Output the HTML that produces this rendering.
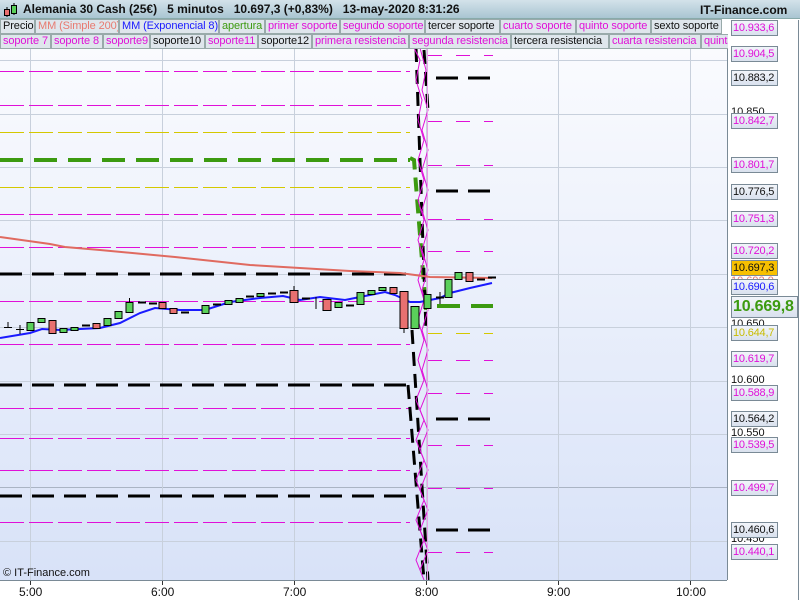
<!DOCTYPE html>
<html><head><meta charset="utf-8"><style>
*{margin:0;padding:0;box-sizing:border-box}
body{width:800px;height:600px;overflow:hidden;background:#fff;font-family:"Liberation Sans",sans-serif;position:relative}
.hdr{position:absolute;left:0;top:0;width:800px;height:19px;background:linear-gradient(#d3e2ea,#a9c5d2);font-size:12px;font-weight:bold;color:#111;border-bottom:1px solid #8aa;white-space:nowrap}
.hdr span{position:absolute;top:2px;white-space:nowrap}
.row{position:absolute;left:0;height:15px;width:728px;background:#fff;overflow:hidden}
.row div{position:absolute;top:0;height:15px;background:#dfe6ec;border:1px solid #9aa;font-size:11px;line-height:13px;padding-left:2px;white-space:nowrap;overflow:hidden;letter-spacing:-0.1px}
.m{color:#e010d8}.k{color:#111}
.lab{position:absolute;left:731px;width:47px;height:16px;border:1px solid #7a8a96;background:linear-gradient(#f2f5fa,#d9e1ee);font-size:11px;line-height:14px;padding-left:1px;white-space:nowrap;overflow:hidden;letter-spacing:-0.2px}
.ax{position:absolute;left:731px;font-size:11px;color:#111}
.tm{position:absolute;top:585px;font-size:12px;color:#111}
</style></head><body>
<svg width="800" height="600" style="position:absolute;left:0;top:0">
<defs><linearGradient id="bg" x1="0" y1="0" x2="0" y2="1"><stop offset="0" stop-color="#fafbfe"/><stop offset="1" stop-color="#d8e2f8"/></linearGradient></defs>
<rect x="0" y="48" width="727" height="532" fill="url(#bg)"/>
<g stroke="#c8d0dc" stroke-width="1">
<line x1="0" y1="60.5" x2="727" y2="60.5"/><line x1="0" y1="114.5" x2="727" y2="114.5"/><line x1="0" y1="167.5" x2="727" y2="167.5"/><line x1="0" y1="220.5" x2="727" y2="220.5"/><line x1="0" y1="274.5" x2="727" y2="274.5"/><line x1="0" y1="327.5" x2="727" y2="327.5"/><line x1="0" y1="381.5" x2="727" y2="381.5"/><line x1="0" y1="434.5" x2="727" y2="434.5"/><line x1="0" y1="487.5" x2="727" y2="487.5" stroke="#aab4c4"/><line x1="0" y1="541.5" x2="727" y2="541.5"/>
<line x1="30.5" y1="48" x2="30.5" y2="580"/><line x1="162.5" y1="48" x2="162.5" y2="580"/><line x1="294.5" y1="48" x2="294.5" y2="580"/><line x1="426.5" y1="48" x2="426.5" y2="580"/><line x1="558.5" y1="48" x2="558.5" y2="580"/><line x1="690.5" y1="48" x2="690.5" y2="580"/>
</g>
<g stroke="#e010d8" stroke-width="1" stroke-dasharray="24,5">
<line x1="0" y1="71.5" x2="410" y2="71.5"/><line x1="0" y1="105.5" x2="410" y2="105.5"/><line x1="0" y1="214.5" x2="410" y2="214.5"/><line x1="0" y1="247.5" x2="410" y2="247.5"/><line x1="0" y1="301.5" x2="410" y2="301.5"/><line x1="0" y1="344.5" x2="410" y2="344.5"/><line x1="0" y1="408.5" x2="410" y2="408.5"/><line x1="0" y1="438.5" x2="410" y2="438.5"/><line x1="0" y1="470.5" x2="410" y2="470.5"/><line x1="0" y1="522.5" x2="410" y2="522.5"/>
</g>
<g stroke="#e010d8" stroke-width="1" stroke-dasharray="14,14">
<line x1="428" y1="55.5" x2="493" y2="55.5"/><line x1="428" y1="121.5" x2="493" y2="121.5"/><line x1="428" y1="165.5" x2="493" y2="165.5"/><line x1="428" y1="219.5" x2="493" y2="219.5"/><line x1="428" y1="251.5" x2="493" y2="251.5"/><line x1="428" y1="360.5" x2="493" y2="360.5"/><line x1="428" y1="393.5" x2="493" y2="393.5"/><line x1="428" y1="445.5" x2="493" y2="445.5"/><line x1="428" y1="488.5" x2="493" y2="488.5"/><line x1="428" y1="552.5" x2="493" y2="552.5"/>
</g>
<g stroke="#d4c800" stroke-width="1" stroke-dasharray="24,5">
<line x1="0" y1="132.5" x2="410" y2="132.5"/><line x1="0" y1="187.5" x2="410" y2="187.5"/>
</g>
<line x1="428" y1="333.5" x2="493" y2="333.5" stroke="#d4c800" stroke-dasharray="14,14"/>
<line x1="0" y1="160" x2="410" y2="160" stroke="#3c9a10" stroke-width="4" stroke-dasharray="23,11"/>
<line x1="437" y1="306" x2="493" y2="306" stroke="#3c9a10" stroke-width="4" stroke-dasharray="23,11"/>
<g stroke="#000" stroke-width="3" stroke-dasharray="22,10">
<line x1="0" y1="274" x2="410" y2="274"/><line x1="0" y1="385" x2="410" y2="385"/><line x1="0" y1="496" x2="410" y2="496"/>
</g>
<g stroke="#000" stroke-width="3" stroke-dasharray="22,10">
<line x1="436" y1="78" x2="493" y2="78"/><line x1="436" y1="191" x2="493" y2="191"/><line x1="436" y1="419" x2="493" y2="419"/><line x1="436" y1="530" x2="493" y2="530"/>
</g>
<g fill="none">
<polyline points="410,158 414,160 426,310" stroke="#3c9a10" stroke-width="4" stroke-dasharray="14,8"/>
<line x1="416" y1="48" x2="426" y2="330" stroke="#000" stroke-width="3" stroke-dasharray="14,8"/>
<line x1="424" y1="50" x2="428" y2="110" stroke="#000" stroke-width="3" stroke-dasharray="14,8"/>
<line x1="412" y1="330" x2="428" y2="580" stroke="#000" stroke-width="3" stroke-dasharray="14,8"/>
<line x1="408" y1="385" x2="424" y2="580" stroke="#000" stroke-width="3" stroke-dasharray="14,8"/>
<polyline points="414,48 420,60 416,80 422,100 418,120 424,140 418,160 424,180 418,200 424,220 418,240 424,260 418,280 424,300 418,320 424,340 418,360 424,380 416,400 424,420 416,440 424,460 416,480 424,500 416,520 424,540 416,560 424,580" stroke="#e010d8" stroke-width="1"/>
<polyline points="420,48 426,70 422,90 428,110 422,130 428,150 422,170 428,190 422,210 428,230 422,250 428,270 422,290 428,310 422,330 428,350 422,370 428,390 420,410 428,430 420,450 428,470 420,490 428,510 420,530 428,550 420,570" stroke="#e010d8" stroke-width="1"/>
<line x1="427.5" y1="48" x2="427.5" y2="580" stroke="#e8a0e8" stroke-width="1"/>
<polyline points="0,237 50,244 65,247 100,250 175,257 250,265 350,271 400,273 430,277 492,278" stroke="#e06a60" stroke-width="2"/>
<polyline points="0,338 30,333 42,329 60,330 100,328 120,323 140,313 155,308 180,310 205,310 230,302 260,298 283,296 300,300 320,297 345,300 360,297 385,292 395,295 410,302 420,302 440,298 450,293 470,288 492,283" stroke="#1a1aff" stroke-width="2"/>
</g>
<g stroke="#000" stroke-width="1">
<line x1="8" y1="322" x2="8" y2="328"/><line x1="4" y1="327.5" x2="12" y2="327.5"/>
<line x1="20" y1="325" x2="20" y2="334"/><line x1="16" y1="329.5" x2="24" y2="329.5"/>
<rect x="27" y="322.5" width="7" height="8" fill="#5ad05a"/>
<rect x="38" y="318.5" width="7" height="4" fill="#5ad05a"/>
<rect x="49" y="320.5" width="7" height="13" fill="#e87070"/>
<rect x="60" y="328.5" width="7" height="4" fill="#5ad05a"/>
<rect x="71" y="327.5" width="7" height="3" fill="#5ad05a"/>
<line x1="82" y1="325.5" x2="90" y2="325.5" stroke-width="2"/>
<rect x="93" y="323.5" width="7" height="5" fill="#e87070"/>
<rect x="104" y="318.5" width="7" height="7" fill="#5ad05a"/>
<rect x="115" y="311.5" width="7" height="7" fill="#5ad05a"/>
<rect x="126" y="302.5" width="7" height="10" fill="#5ad05a"/><line x1="129.5" y1="298" x2="129.5" y2="302"/>
<line x1="138" y1="302.5" x2="146" y2="302.5" stroke-width="2"/><line x1="149" y1="303.5" x2="157" y2="303.5" stroke-width="2"/>
<rect x="159" y="302.5" width="7" height="6" fill="#e87070"/>
<rect x="170" y="308.5" width="7" height="5" fill="#e87070"/>
<line x1="181" y1="312.5" x2="189" y2="312.5" stroke-width="2"/>
<rect x="202" y="305.5" width="7" height="8" fill="#5ad05a"/>
<line x1="213" y1="304.5" x2="221" y2="304.5" stroke-width="2"/>
<rect x="225" y="300.5" width="7" height="4" fill="#5ad05a"/>
<rect x="236" y="298.5" width="7" height="4" fill="#5ad05a"/>
<line x1="246" y1="296.5" x2="254" y2="296.5" stroke-width="2"/>
<rect x="257" y="293.5" width="7" height="3" fill="#5ad05a"/>
<line x1="268" y1="293.5" x2="276" y2="293.5" stroke-width="2"/><line x1="280" y1="292.5" x2="288" y2="292.5" stroke-width="2"/>
<rect x="290" y="290.5" width="8" height="12" fill="#e87070"/><line x1="294" y1="286" x2="294" y2="290"/>
<line x1="302" y1="298.5" x2="310" y2="298.5" stroke-width="2"/><line x1="316" y1="297" x2="316" y2="309"/>
<rect x="323" y="299.5" width="8" height="11" fill="#e87070"/>
<rect x="335" y="302.5" width="7" height="5" fill="#5ad05a"/>
<line x1="346" y1="305.5" x2="354" y2="305.5" stroke-width="2"/>
<rect x="357" y="292.5" width="7" height="12" fill="#5ad05a"/>
<rect x="368" y="290.5" width="7" height="4" fill="#5ad05a"/>
<rect x="379" y="287.5" width="7" height="3" fill="#5ad05a"/>
<rect x="390" y="287.5" width="7" height="6" fill="#e87070"/>
<rect x="400" y="291.5" width="8" height="37" fill="#e87070"/><line x1="404" y1="329" x2="404" y2="333"/>
<rect x="411" y="306.5" width="8" height="22" fill="#5ad05a"/>
<rect x="424" y="294.5" width="7" height="14" fill="#5ad05a"/>
<line x1="440" y1="292" x2="440" y2="304"/><line x1="436" y1="297.5" x2="444" y2="297.5" stroke-width="2"/>
<rect x="445" y="279.5" width="7" height="18" fill="#5ad05a"/>
<rect x="455" y="272.5" width="7" height="7" fill="#5ad05a"/>
<rect x="466" y="272.5" width="7" height="9" fill="#e87070"/>
<line x1="477" y1="279.5" x2="485" y2="279.5" stroke-width="2"/><line x1="488" y1="277.5" x2="496" y2="277.5" stroke-width="2"/>
</g>
<rect x="727" y="48" width="73" height="552" fill="#fff"/>
<line x1="727.5" y1="20" x2="727.5" y2="580" stroke="#7a8a96"/>
<line x1="0" y1="580.5" x2="727" y2="580.5" stroke="#7a8a96"/>
<rect x="0" y="581" width="727" height="19" fill="#fff"/>
<g stroke="#333"><line x1="30.5" y1="581" x2="30.5" y2="585"/><line x1="162.5" y1="581" x2="162.5" y2="585"/><line x1="294.5" y1="581" x2="294.5" y2="585"/><line x1="426.5" y1="581" x2="426.5" y2="585"/><line x1="558.5" y1="581" x2="558.5" y2="585"/><line x1="690.5" y1="581" x2="690.5" y2="585"/></g>
<line x1="798.5" y1="20" x2="798.5" y2="600" stroke="#7a8a96"/>
</svg>
<div class="hdr">
<svg width="16" height="18" style="position:absolute;left:3px;top:1px"><line x1="4" y1="6" x2="4" y2="16" stroke="#000"/><rect x="1.5" y="8.5" width="5" height="6" fill="#e87070" stroke="#000"/><line x1="11" y1="2" x2="11" y2="14" stroke="#000"/><rect x="8.5" y="4.5" width="5" height="8" fill="#5ad05a" stroke="#000"/></svg>
<span style="left:23px">Alemania 30 Cash (25€)&nbsp;&nbsp;&nbsp;5 minutos&nbsp;&nbsp;&nbsp;10.697,3 (+0,83%)&nbsp;&nbsp;&nbsp;13-may-2020 8:31:26</span>
<span style="left:700px;top:3px">IT-Finance.com</span>
</div>
<div class="row" style="top:19px">
<div class="k" style="left:0;width:35px">Precio</div>
<div style="left:35px;width:84px;color:#e87a70">MM (Simple 200)</div>
<div style="left:119px;width:100px;color:#1a1aff">MM (Exponencial 8)</div>
<div style="left:219px;width:46px;color:#3c9a10">apertura</div>
<div class="m" style="left:265px;width:75px">primer soporte</div>
<div class="m" style="left:340px;width:85px">segundo soporte</div>
<div class="k" style="left:425px;width:75px">tercer soporte</div>
<div class="m" style="left:500px;width:76px">cuarto soporte</div>
<div class="m" style="left:576px;width:75px">quinto soporte</div>
<div class="k" style="left:651px;width:71px">sexto soporte</div>
</div>
<div class="row" style="top:34px">
<div class="m" style="left:0;width:51px">soporte 7</div>
<div class="m" style="left:51px;width:52px">soporte 8</div>
<div class="m" style="left:103px;width:47px">soporte9</div>
<div class="k" style="left:150px;width:55px">soporte10</div>
<div class="m" style="left:205px;width:53px">soporte11</div>
<div class="k" style="left:258px;width:54px">soporte12</div>
<div class="m" style="left:312px;width:97px">primera resistencia</div>
<div class="m" style="left:409px;width:102px">segunda resistencia</div>
<div class="k" style="left:511px;width:98px">tercera resistencia</div>
<div class="m" style="left:609px;width:92px">cuarta resistencia</div>
<div class="m" style="left:701px;width:40px">quinta</div>
</div>
<div class="ax" style="top:106px">10.850</div>
<div class="ax" style="top:318px">10.650</div>
<div class="ax" style="top:374px">10.600</div>
<div class="ax" style="top:427px">10.550</div>
<div class="ax" style="top:533px">10.450</div>
<div class="lab m" style="top:20px">10.933,6</div>
<div class="lab m" style="top:46px">10.904,5</div>
<div class="lab k" style="top:70px">10.883,2</div>
<div class="lab m" style="top:113px">10.842,7</div>
<div class="lab m" style="top:157px">10.801,7</div>
<div class="lab k" style="top:184px">10.776,5</div>
<div class="lab m" style="top:211px">10.751,3</div>
<div class="lab m" style="top:243px">10.720,2</div>
<div class="ax" style="top:275px;color:#e87a70">10.692,9</div>
<div class="lab" style="top:260px;background:#f7c000;color:#111">10.697,3</div>
<div class="lab" style="top:279px;color:#1a1aff">10.690,6</div>
<div class="lab" style="top:296px;left:731px;width:67px;height:22px;font-size:16px;line-height:20px;font-weight:bold;color:#3c9a10">10.669,8</div>
<div class="lab" style="top:325px;color:#c8bc00">10.644,7</div>
<div class="lab m" style="top:351px">10.619,7</div>
<div class="lab m" style="top:385px">10.588,9</div>
<div class="lab k" style="top:411px">10.564,2</div>
<div class="lab m" style="top:437px">10.539,5</div>
<div class="lab m" style="top:480px">10.499,7</div>
<div class="lab k" style="top:522px">10.460,6</div>
<div class="lab m" style="top:544px">10.440,1</div>
<div style="position:absolute;left:3px;top:567px;font-size:11px;color:#111">© IT-Finance.com</div>
<div class="tm" style="left:19px">5:00</div>
<div class="tm" style="left:151px">6:00</div>
<div class="tm" style="left:283px">7:00</div>
<div class="tm" style="left:415px">8:00</div>
<div class="tm" style="left:547px">9:00</div>
<div class="tm" style="left:676px">10:00</div>
</body></html>
